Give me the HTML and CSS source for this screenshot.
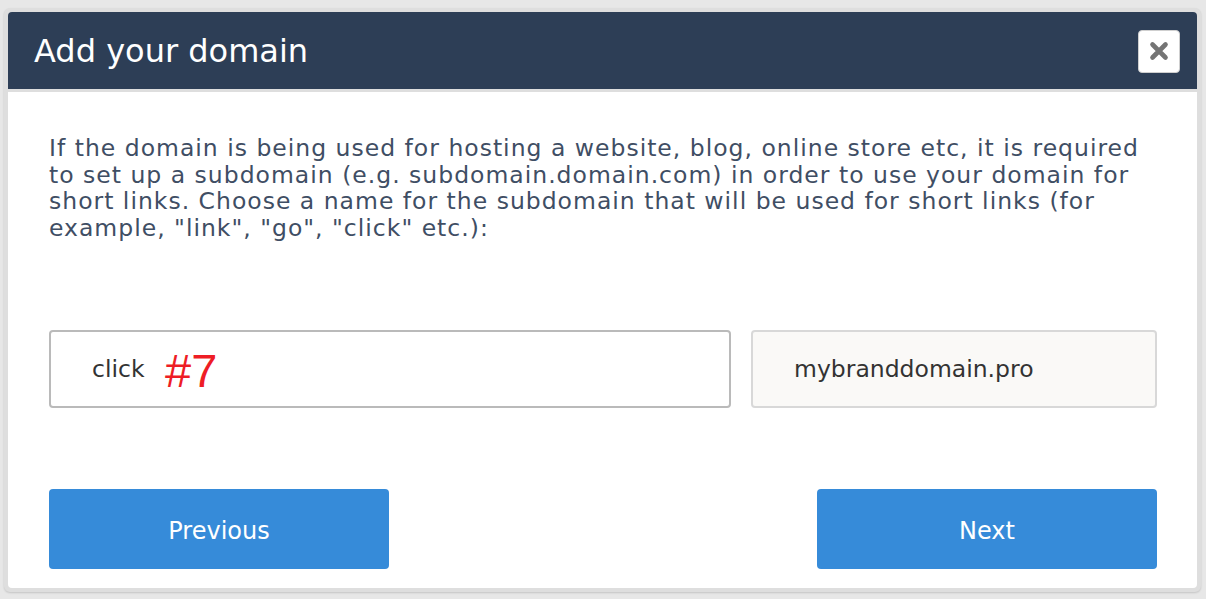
FILE: index.html
```html
<!DOCTYPE html>
<html lang="en">
<head>
<meta charset="utf-8">
<title>Add your domain</title>
<link rel="stylesheet" href="styles.css">
</head>
<body>
<div class="modal">
  <div class="modal-header">
    <h1 class="modal-title">Add your domain</h1>
    <button class="close-btn" type="button" aria-label="Close">
      <svg width="20" height="20" viewBox="0 0 20 20" aria-hidden="true">
        <path d="M3.5 3.5 L16.5 16.5 M16.5 3.5 L3.5 16.5" stroke="#747474" stroke-width="4.6" stroke-linecap="round" fill="none"/>
      </svg>
    </button>
  </div>
  <div class="modal-body">
    <p class="intro">If the domain is being used for hosting a website, blog, online store etc, it is required to set up a subdomain (e.g. subdomain.domain.com) in order to use your domain for short links. Choose a name for the subdomain that will be used for short links (for example, "link", "go", "click" etc.):</p>
    <div class="fields">
      <div class="field-wrap">
        <input class="field" type="text" value="click">
        <span class="marker">#7</span>
      </div>
      <input class="field field-static" type="text" value="mybranddomain.pro" readonly>
    </div>
    <div class="actions">
      <button class="btn" type="button">Previous</button>
      <button class="btn" type="button">Next</button>
    </div>
  </div>
</div>
</body>
</html>
```

FILE: styles.css
```css
html, body {
  margin: 0;
  padding: 0;
}

body {
  background: #e7e7e7;
  padding: 8px 5px 7px 4px;
  font-family: "DejaVu Sans", sans-serif;
}

.modal {
  border: 4px solid #dedede;
  border-radius: 6px;
  background: #dedede;
  display: flex;
  flex-direction: column;
  gap: 3px;
  box-shadow: 0 1px 2px rgba(0, 0, 0, 0.15);
}

.modal-header {
  background: #2d3e56;
  border-radius: 4px 4px 0 0;
  height: 77px;
  display: flex;
  align-items: center;
  justify-content: space-between;
  padding: 0 17px 0 26px;
}

.modal-title {
  margin: 0;
  color: #ffffff;
  font-weight: normal;
  font-size: 32px;
  line-height: 40px;
}

.close-btn {
  width: 42px;
  height: 43px;
  margin-top: 1px;
  background: #ffffff;
  border: 1px solid #cfcfcf;
  border-radius: 4px;
  padding: 0;
  display: flex;
  align-items: center;
  justify-content: center;
}

.modal-body {
  background: #ffffff;
  border-radius: 0 0 4px 4px;
  padding: 43px 40px 19px 41px;
}

.intro {
  margin: 0;
  color: #3f4e64;
  font-size: 23.5px;
  letter-spacing: 1px;
  line-height: 26.5px;
}

.fields {
  margin-top: 89px;
  display: grid;
  grid-template-columns: 1fr 406px;
  gap: 20px;
}

.field-wrap {
  position: relative;
}

.field {
  box-sizing: border-box;
  width: 100%;
  height: 78px;
  border: 2px solid #bababa;
  border-radius: 4px;
  background: #ffffff;
  padding: 0 0 0 41px;
  font-family: "DejaVu Sans", sans-serif;
  font-size: 23.5px;
  color: #333333;
  outline: none;
  margin: 0;
}

.field-static {
  background: #faf9f7;
  border-color: #d8d8d8;
}

.marker {
  position: absolute;
  left: 116px;
  top: 17px;
  font-family: "Liberation Sans", Arial, sans-serif;
  font-size: 47px;
  line-height: 47px;
  color: #ee1d25;
}

.actions {
  margin-top: 81px;
  display: flex;
  justify-content: space-between;
}

.btn {
  width: 340px;
  height: 80px;
  background: #368bd9;
  border: none;
  border-radius: 4px;
  color: #ffffff;
  font-family: "DejaVu Sans", sans-serif;
  font-size: 24px;
  padding: 3px 0 0;
}
```
